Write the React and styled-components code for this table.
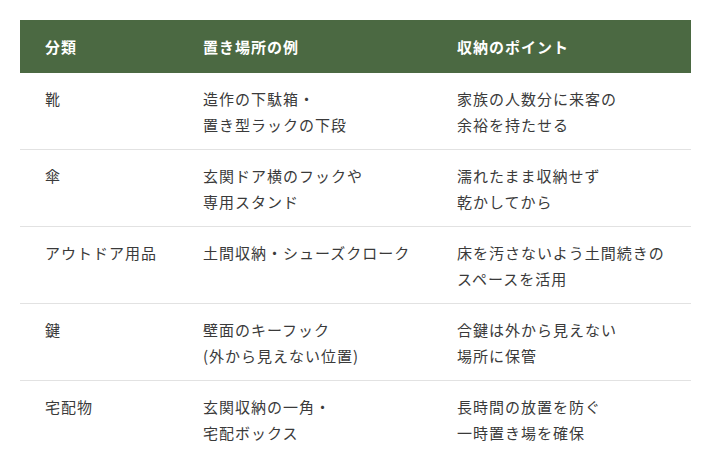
import React from 'react';
import styled, { createGlobalStyle } from 'styled-components';

const GlobalStyle = createGlobalStyle`
  html, body {
    margin: 0;
    padding: 0;
    background: #ffffff;
  }
  body {
    font-family: "Noto Sans CJK JP", "Noto Sans", sans-serif;
    color: #333333;
  }
`;

const Wrapper = styled.div`
  padding: 20px 20px 0;
`;

const Table = styled.table`
  width: 671px;
  border-collapse: collapse;
  table-layout: fixed;
  font-size: 15px;
  letter-spacing: 1px;
`;

const HeadCell = styled.th`
  width: ${(p) => p.$w || 'auto'};
  background: #4b6942;
  color: #ffffff;
  font-weight: 700;
  text-align: left;
  padding: 14px 0 14px 25px;
  line-height: 25px;
`;

const Row = styled.tr`
  border-bottom: ${(p) => (p.$last ? 'none' : '1px solid #e2e2e2')};
`;

const Cell = styled.td`
  vertical-align: top;
  padding: 13px 0 11px 25px;
  line-height: 26px;
  color: #3a3a3a;
  white-space: nowrap;
`;

const rows = [
  ['靴', ['造作の下駄箱・', '置き型ラックの下段'], ['家族の人数分に来客の', '余裕を持たせる']],
  ['傘', ['玄関ドア横のフックや', '専用スタンド'], ['濡れたまま収納せず', '乾かしてから']],
  ['アウトドア用品', ['土間収納・シューズクローク'], ['床を汚さないよう土間続きの', 'スペースを活用']],
  ['鍵', ['壁面のキーフック', '(外から見えない位置)'], ['合鍵は外から見えない', '場所に保管']],
  ['宅配物', ['玄関収納の一角・', '宅配ボックス'], ['長時間の放置を防ぐ', '一時置き場を確保']],
];

const Lines = ({ items }) =>
  items.map((t, i) => (
    <React.Fragment key={i}>
      {i > 0 && <br />}
      {t}
    </React.Fragment>
  ));

export default function App() {
  return (
    <>
      <GlobalStyle />
      <Wrapper>
        <Table>
          <thead>
            <tr>
              <HeadCell $w="133px">分類</HeadCell>
              <HeadCell $w="229px">置き場所の例</HeadCell>
              <HeadCell>収納のポイント</HeadCell>
            </tr>
          </thead>
          <tbody>
            {rows.map(([kind, place, point], i) => (
              <Row key={kind} $last={i === rows.length - 1}>
                <Cell>{kind}</Cell>
                <Cell>
                  <Lines items={place} />
                </Cell>
                <Cell>
                  <Lines items={point} />
                </Cell>
              </Row>
            ))}
          </tbody>
        </Table>
      </Wrapper>
    </>
  );
}
